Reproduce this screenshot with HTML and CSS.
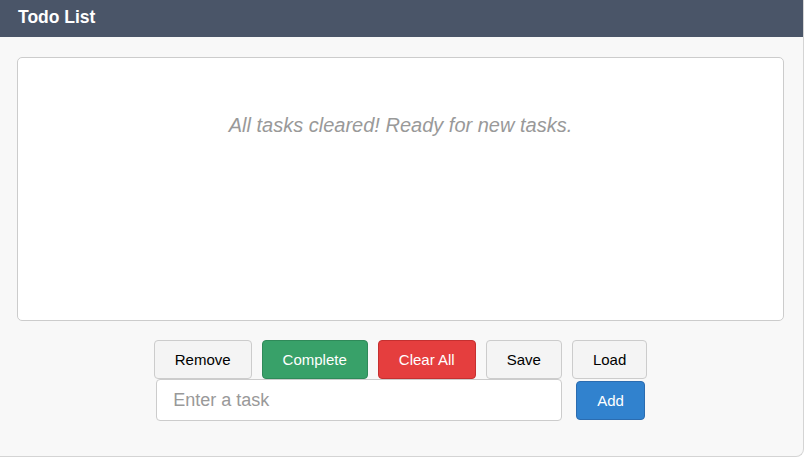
FILE: index.html
```html
<!DOCTYPE html>
<html>
<head>
<meta charset="utf-8">
<link rel="stylesheet" href="styles.css">
</head>
<body>
<div class="app">
  <div class="header">Todo List</div>
  <div class="content">
    <div class="list">
      <p class="empty">All tasks cleared! Ready for new tasks.</p>
    </div>
    <div class="actions">
      <button class="btn">Remove</button>
      <button class="btn btn-green">Complete</button>
      <button class="btn btn-red">Clear All</button>
      <button class="btn">Save</button>
      <button class="btn">Load</button>
    </div>
    <div class="entry">
      <input class="task-input" type="text" placeholder="Enter a task">
      <button class="btn btn-blue">Add</button>
    </div>
  </div>
</div>
</body>
</html>
```
FILE: styles.css
```css
html, body {
  margin: 0;
  padding: 0;
  background: #ffffff;
  font-family: "Liberation Sans", Arial, sans-serif;
}
.app {
  width: 803px;
  height: 456px;
  background: #f8f8f8;
  border-right: 1px solid #d4d4d4;
  border-bottom: 1px solid #d4d4d4;
  border-bottom-right-radius: 8px;
  display: flex;
  flex-direction: column;
  overflow: hidden;
}
.header {
  height: 37px;
  background: #4a5568;
  color: #ffffff;
  font-weight: bold;
  font-size: 17.5px;
  line-height: 34px;
  padding-left: 18px;
  box-sizing: border-box;
}
.content {
  padding: 20px 19px 0 17px;
  display: flex;
  flex-direction: column;
}
.list {
  height: 264px;
  background: #ffffff;
  border: 1px solid #cccccc;
  border-radius: 5px;
  box-sizing: border-box;
}
.empty {
  margin: 56px 0 0 0;
  text-align: center;
  font-style: italic;
  font-size: 20px;
  line-height: 23px;
  color: #999999;
}
.actions {
  display: flex;
  justify-content: center;
  gap: 10px;
  margin-top: 19px;
}
.btn {
  font-family: "Liberation Sans", Arial, sans-serif;
  font-size: 15px;
  line-height: 17px;
  padding: 10px 20px;
  border: 1px solid #cccccc;
  border-radius: 4px;
  background: #f4f4f4;
  color: #000000;
}
.btn-green {
  background: #38a169;
  border-color: #2f8a59;
  color: #ffffff;
}
.btn-red {
  background: #e53e3e;
  border-color: #c53030;
  color: #ffffff;
}
.btn-blue {
  background: #3182ce;
  border-color: #2b6cb0;
  color: #ffffff;
}
.entry {
  display: flex;
  justify-content: center;
  align-items: center;
  gap: 14px;
}
.task-input {
  width: 406px;
  height: 42px;
  box-sizing: border-box;
  padding: 0 16px;
  font-family: "Liberation Sans", Arial, sans-serif;
  font-size: 18px;
  border: 1px solid #cccccc;
  border-radius: 4px;
  background: #ffffff;
  color: #333333;
}
.task-input::placeholder {
  color: #999999;
}
```
